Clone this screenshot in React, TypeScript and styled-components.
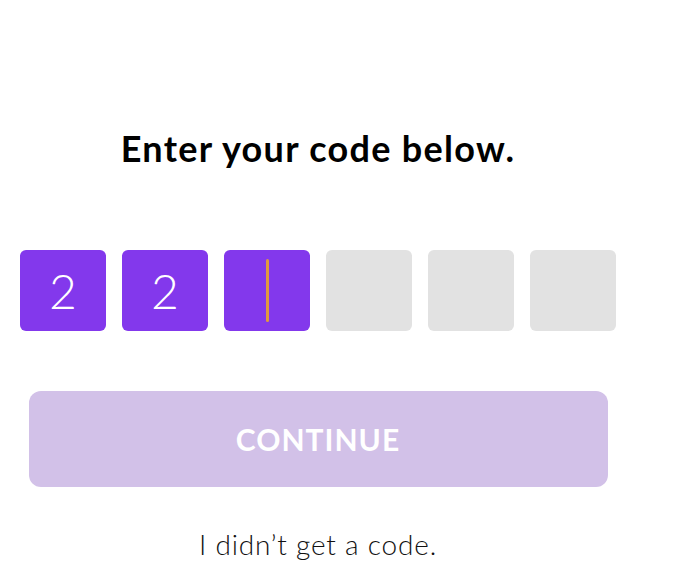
import React from "react";
import styled, { createGlobalStyle } from "styled-components";

const GlobalStyle = createGlobalStyle`
  html, body {
    margin: 0;
    padding: 0;
    background: #ffffff;
  }
  body {
    font-family: Lato, "Open Sans", sans-serif;
  }
`;

const code = ["2", "2", "", "", "", ""];
const activeIndex = 2;

const App = () => {
  return (
    <Wrapper>
      <GlobalStyle />
      <Title>Enter your code below.</Title>
      <CodeRow>
        {code.map((digit, i) => (
          <CodeBox key={i} filled={i <= activeIndex}>
            {digit}
            {i === activeIndex && <Caret />}
          </CodeBox>
        ))}
      </CodeRow>
      <ContinueButton disabled>CONTINUE</ContinueButton>
      <ResendLink>I didn’t get a code.</ResendLink>
    </Wrapper>
  );
};

const Wrapper = styled.div`
  width: 636px;
  height: 585px;
  display: flex;
  flex-direction: column;
  align-items: center;
  box-sizing: border-box;
  padding-top: 124px;
`;

const Title = styled.h1`
  margin: 0;
  font-size: 36px;
  font-weight: 700;
  letter-spacing: 1.3px;
  color: #000000;
  line-height: 48px;
`;

const CodeRow = styled.div`
  display: flex;
  gap: 15.5px;
  margin-top: 78px;
`;

const CodeBox = styled.div<{ filled: boolean }>`
  width: 86.5px;
  height: 81px;
  border-radius: 6px;
  background: ${(p) => (p.filled ? "#8338ec" : "#e2e2e2")};
  color: #ffffff;
  display: flex;
  align-items: center;
  justify-content: center;
  font-size: 48px;
  font-weight: 300;
`;

const Caret = styled.span`
  display: block;
  width: 3px;
  height: 63px;
  border-radius: 2px;
  background: #e0993f;
`;

const ContinueButton = styled.button`
  margin-top: 60px;
  width: 579px;
  height: 96px;
  border: none;
  border-radius: 12px;
  background: #d2c1e8;
  color: #ffffff;
  font-family: Lato, "Open Sans", sans-serif;
  font-size: 30px;
  font-weight: 700;
  letter-spacing: 1px;
  cursor: default;
`;

const ResendLink = styled.p`
  margin: 40px 0 0;
  font-size: 28px;
  font-weight: 300;
  letter-spacing: 0.8px;
  color: #111111;
`;

export default App;
